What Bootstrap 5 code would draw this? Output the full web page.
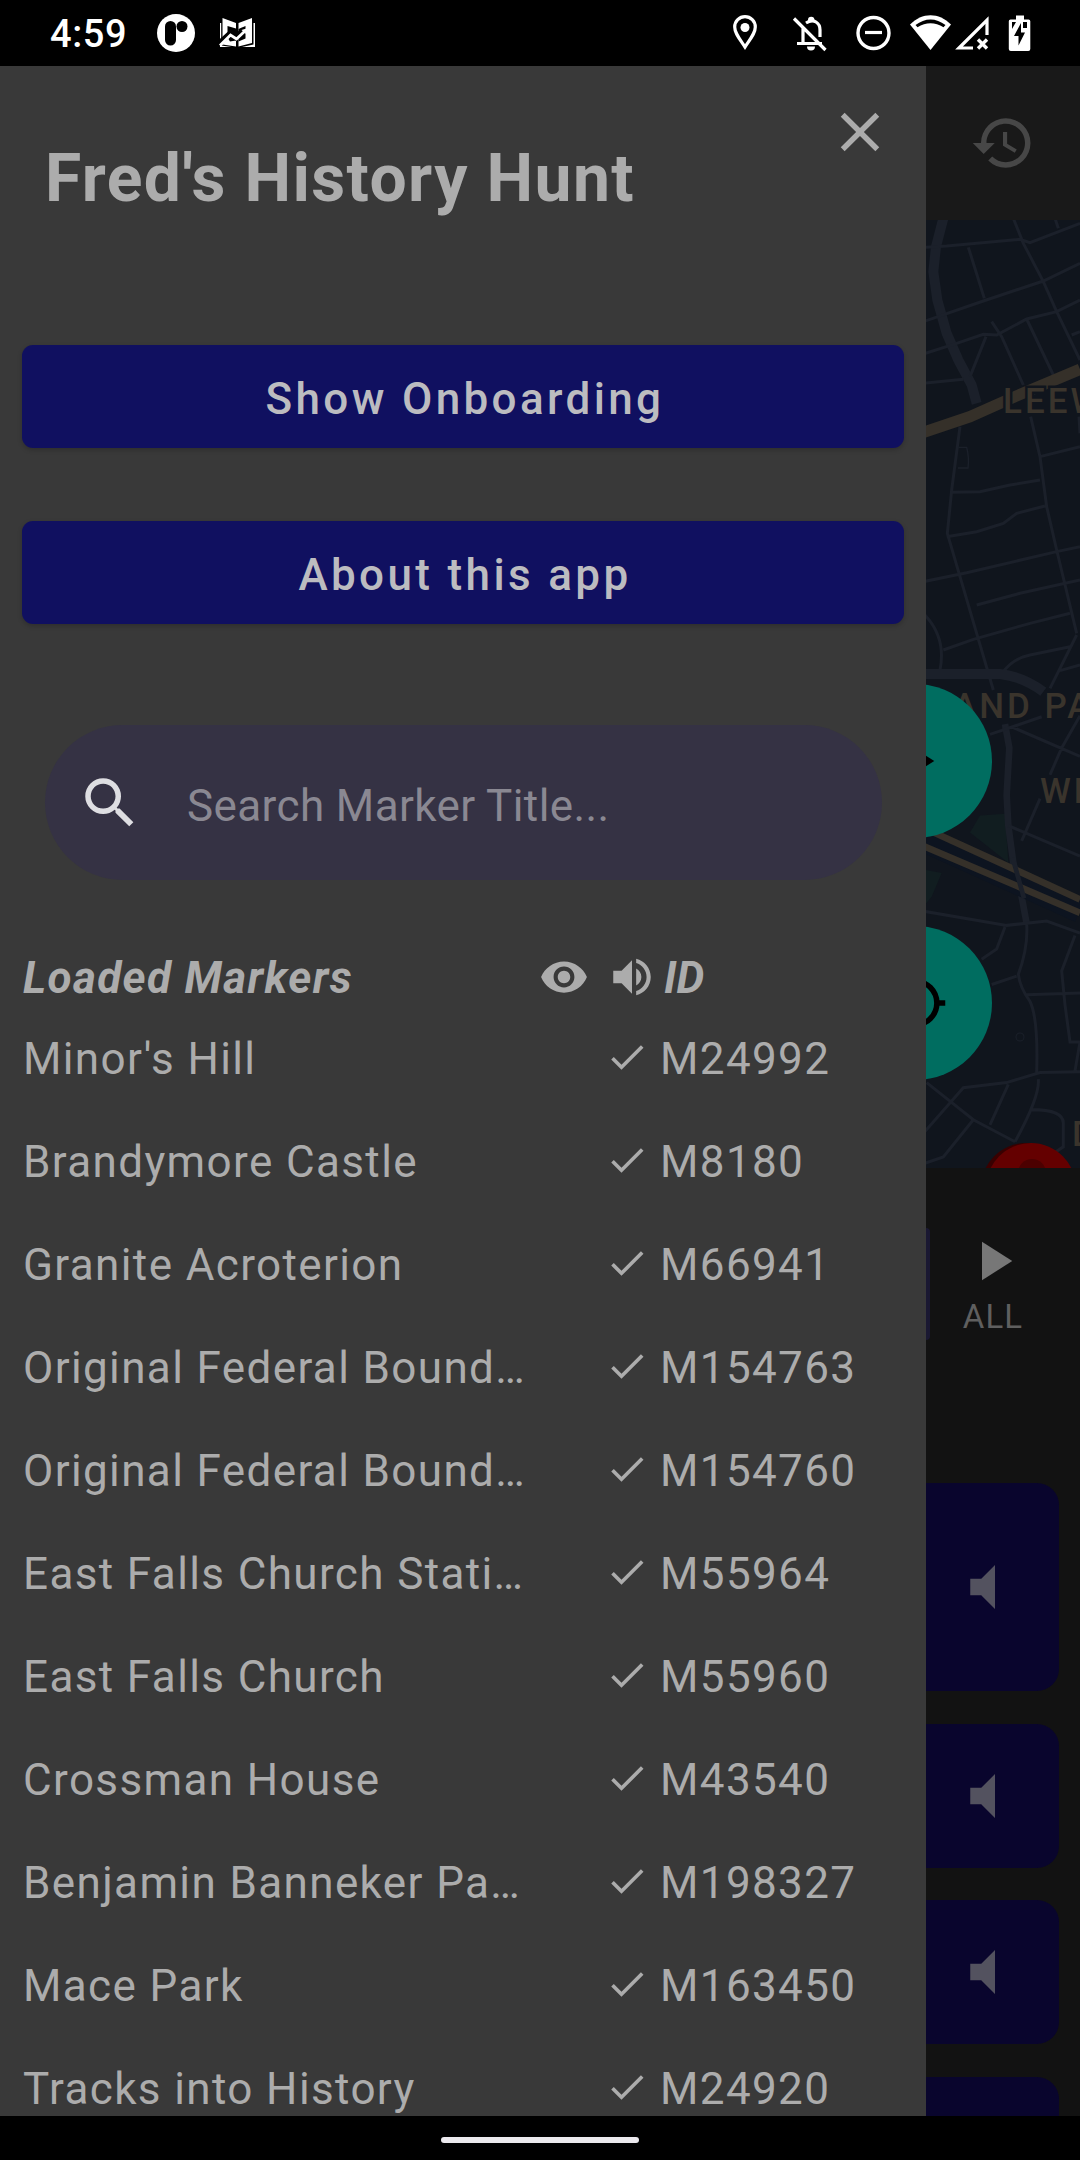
<!DOCTYPE html>
<html lang="en">
<head>
<meta charset="utf-8">
<meta name="viewport" content="width=device-width, initial-scale=1">
<title>Fred's History Hunt</title>
<link href="https://cdn.jsdelivr.net/npm/bootstrap@5.3.0/dist/css/bootstrap.min.css" rel="stylesheet">
<style>
body{font-family:Roboto,"Noto Sans",sans-serif;background:#000;color:#acacac;width:1080px;height:2160px;overflow:hidden;font-size:44px;line-height:1.2}
svg{display:block;flex:none}
.statusbar{height:66px;color:#fff;padding-left:50px}
.clock{font:500 38px/66px Roboto,sans-serif;letter-spacing:.6px;width:107px;padding-top:2px}
.screen{height:2050px}
.drawer{width:926px;background:#393939;overflow:hidden}
.side{width:154px;background:#121212;overflow:hidden}
.drawer>*,.side>*{flex:none}
.drawer-head{height:279px;padding:33px 33px 0 45px}
.drawer-title{font-size:66px;font-weight:700;line-height:78px;margin:41px 0 0;white-space:nowrap;letter-spacing:1.38px}
.btn-wide{height:103px;margin:0 22px 73px;border-radius:11px;background:#101060;color:#bcbcc0;font-size:44px;font-weight:500;letter-spacing:3.36px;line-height:1;border:0;box-shadow:0 2px 5px rgba(0,0,0,.2);padding:4px 0 0 4px}
.search{height:155px;margin:28px 44px 0 45px;border-radius:78px;background:#353244;padding:0 32px}
.search-text{color:#8a8892;margin-left:44px;padding-top:7px;letter-spacing:.4px}
.list-head{height:54px;margin-top:70px;font-weight:700;font-style:italic;padding-left:23px}
.list-head span{padding-top:2px}
.c-name{width:516px;letter-spacing:1.38px;white-space:nowrap}
.marker{height:103px;padding-left:23px;letter-spacing:1.38px;line-height:52px;padding-top:29px}
.speaker{margin-left:18px}
.tick{margin:2px 0 0 66px}
.c-id{margin-left:11px}
.h-id{margin-left:7px}
.topbar{height:154px;background:#191919;padding:44px 0 0 44px;color:#474747}
.mapbox{height:948px;background:#10151d;overflow:hidden}
.fab{width:154px;height:154px;border-radius:50%;left:-88px;background:#006d60;color:#000}
.fab-play{top:464px}.fab-loc{top:706px}
.controls{height:315px}
.edge{width:4px;height:112px;background:#1a1832;border-radius:0 5px 5px 0;margin-top:60px}
.all{width:66px;margin:60px 0 0 30px;color:#777}
.all-text{font-size:33px;line-height:40px;color:#5f5f5f;letter-spacing:1.1px;margin-top:3px}
.tile{background:#09052d;color:#53525f;width:133px;height:144px;border-radius:0 22px 22px 0;margin-bottom:32.5px;padding-left:25px}
.tile-tall{height:208px}
.navbar-pill{height:44px}
.navbar-pill span{width:198px;height:6px;border-radius:3px;background:#ebe9ee;margin-top:4px}
</style>
</head>
<body>
<header class="statusbar d-flex align-items-center">
  <div class="clock">4:59</div>
  <svg width="38" height="38" viewBox="0 0 38 38"><circle cx="19" cy="19" r="19" fill="#fff"/><rect x="8" y="7" width="11" height="24.500" rx="5.500"/><circle cx="25" cy="12.500" r="5.500"/></svg>
  <svg class="ms-4" width="36" height="32" viewBox="219 18 36 32"><g fill="#fff"><path d="M222.500 19l13.500 5v23.500l-13.500-2zM238.500 24L252 19v25l-13.500 3.500zM220 24h1.200v22.500l10 1.500H220zM253.500 24h1.500v24h-13l11.500-2.500z"/></g><path d="M227.500 27l8.500 2.500v12l-6 1-2.500-4zM238.500 30l7-3v12.500l-7 3z"/><path d="M219 44.500l11-10 6 4 8-8" stroke="#000" stroke-width="5.500" fill="none"/><path d="M220 46.500l10.500-10.500 6 4 8.500-8" stroke="#fff" stroke-width="2.800" fill="none"/><path d="M241.500 31l5-1.500-.8 5.500z" fill="#fff"/></svg>
  <svg class="ms-auto" width="350" height="66" viewBox="730 0 350 66">
    <g fill="none" stroke="#fff" stroke-width="3.200">
      <path d="M745 47C739 38 734.700 33 734.700 27a10.300 10.300 0 0 1 20.600 0C755.300 33 751 38 745 47z"/>
      <path d="M803 28v15M797 43.500h25M806 23c8-5 14 0 14 7v7M794 18.500l31.500 31.500"/>
      <circle cx="873.500" cy="33" r="15.500" stroke-width="3.400"/><path d="M865 32.500h17"/>
      <path d="M973 48h-14L987 20v15"/>
      <path d="M978 39.500l9 9m0-9l-9 9" stroke-width="3.400"/>
    </g>
    <g fill="#fff"><circle cx="745" cy="27.500" r="4.500"/><path d="M808 22v-2a3.200 3.200 0 0 1 6.400 0v2zM807 46.500h8a4 4 0 0 1-8 0z"/>
    <path d="M910 24.500C922 12 939 12 951 24.500L930.500 50z"/>
    <path d="M1016 15.500h8v4h4.500a1.800 1.800 0 0 1 1.800 1.800V49a2 2 0 0 1-2 2h-17.500a2 2 0 0 1-2-2V21.300a1.800 1.800 0 0 1 1.800-1.800h5.400z"/></g>
    <path d="M915.500 25C925 17.500 936 17.500 945.500 25l-2 2.300C935 22 926 22 917.500 27.300z"/>
    <path d="M1021 23l-7 13h4.500v9.500l6.500-13h-4zM1012 22h4l-4 7zM1023 22h4v6h-4z"/>
  </svg>
</header>

<main class="screen d-flex">
  <aside class="drawer d-flex flex-column">
    <div class="drawer-head d-flex justify-content-between">
      <h1 class="drawer-title">Fred's History Hunt</h1>
      <svg width="66" height="66" viewBox="0 0 24 24" fill="currentColor"><path d="M19 6.410L17.590 5 12 10.590 6.410 5 5 6.410 10.590 12 5 17.590 6.410 19 12 13.410 17.590 19 19 17.590 13.410 12z"/></svg>
    </div>
    <button class="btn btn-wide" type="button">Show Onboarding</button>
    <button class="btn btn-wide" type="button">About this app</button>
    <div class="search d-flex align-items-center">
      <svg width="66" height="66" viewBox="0 0 24 24" fill="#dedee2"><path d="M15.500 14h-.79l-.28-.27A6.471 6.471 0 0 0 16 9.500 6.500 6.500 0 1 0 9.500 16c1.610 0 3.090-.59 4.230-1.570l.27.28v.79l5 4.990L20.490 19l-4.990-5zm-6 0C7.010 14 5 11.990 5 9.500S7.010 5 9.500 5 14 7.010 14 9.500 11.990 14 9.500 14z"/></svg>
      <span class="search-text">Search Marker Title...</span>
    </div>
    <div class="list-head d-flex align-items-center">
      <span class="c-name">Loaded Markers</span>
      <svg width="50" height="50" viewBox="0 0 24 24" fill="currentColor"><path d="M12 4.500C7 4.500 2.730 7.610 1 12c1.730 4.390 6 7.500 11 7.500s9.270-3.110 11-7.500c-1.730-4.390-6-7.500-11-7.500zM12 17c-2.760 0-5-2.240-5-5s2.240-5 5-5 5 2.240 5 5-2.240 5-5 5zm0-8c-1.660 0-3 1.340-3 3s1.340 3 3 3 3-1.340 3-3-1.340-3-3-3z"/></svg>
      <svg class="speaker" width="50" height="50" viewBox="0 0 24 24" fill="currentColor"><path d="M3 9v6h4l5 5V4L7 9H3zm13.500 3c0-1.770-1.020-3.290-2.500-4.030v8.050c1.480-.73 2.500-2.250 2.500-4.020zM14 3.230v2.060c2.890.86 5 3.540 5 6.710s-2.110 5.850-5 6.710v2.060c4.010-.91 7-4.490 7-8.770s-2.990-7.860-7-8.770z"/></svg>
      <span class="h-id">ID</span>
    </div>
    <div id="markers"></div>
  </aside>

  <section class="side d-flex flex-column">
    <div class="topbar"><svg width="66" height="66" viewBox="0 0 24 24" fill="currentColor"><path d="M13 3a9 9 0 0 0-9 9H1l3.890 3.890.07.14L9 12H6c0-3.870 3.130-7 7-7s7 3.130 7 7-3.130 7-7 7c-1.930 0-3.680-.79-4.940-2.060l-1.420 1.420A8.954 8.954 0 0 0 13 21a9 9 0 0 0 0-18zm-1 5v5l4.280 2.540.72-1.210-3.500-2.080V8H12z"/></svg></div>
    <div class="mapbox position-relative">
      <svg width="154" height="948" viewBox="926 220 154 948">
        <g transform="translate(880 200) scale(.33333)" fill="none" stroke="#1b202a" stroke-width="9">
          <path d="M190 55L168 140 160 215 172 300 200 400 235 480 275 555 290 610" stroke-width="30"/>
          <path d="M130 142L200 138 420 118 450 128 600 70M265 142L313 295M400 55L430 130 490 245 530 335 600 480M525 55L535 85M130 365L310 303 490 243 600 190M130 462L230 430 310 403 350 405 440 357 530 335 600 300M335 365L365 410 430 555M440 357L520 525M318 410L270 530M130 550L250 538M575 405L600 395"/>
          <path d="M240 680L215 870 202 1000 240 1130 290 1300 340 1470M452 650L480 770 500 920 530 1050 590 1300M480 770L600 740M215 877L300 875 390 855 480 840M200 1010L290 995 370 970 410 940 495 918M130 1145L260 1118 530 1055 600 1040M290 1215L420 1180 600 1140M190 1350L280 1318 450 1270 570 1240M130 1240Q200 1310 180 1410M370 1415Q400 1375 450 1365L570 1340M590 1305L510 1465M540 1412L600 1395M597 650L600 700"/>
          <path d="M235 742h25q8 30 4 62h-30" stroke-width="4"/>
          <path d="M130 1422H360Q430 1430 490 1475" stroke-width="30"/>
          <path d="M130 697L270 650 400 592 600 508" stroke="#353029" stroke-width="34"/>
        </g>
        <g transform="translate(880 660) scale(.33333 .33807)" fill="none" stroke="#1b202a" stroke-width="9">
          <path d="M270 510L300 460 375 455 385 600zM130 620l55 10-30 70-25 30z" fill="#111d20" stroke="none"/>
          <path d="M375 190L388 260 380 400 385 490 400 600 425 700 440 780" stroke-width="20"/>
          <path d="M330 220L485 168M400 200L600 285M600 165L545 260 510 340M480 410L425 535M385 490L600 580M130 743L380 785 500 772 600 808M375 790L350 855 305 885M335 960L410 935M440 780Q445 850 415 930 420 970 450 1010 475 1060 470 1220M440 990L600 985M585 815L545 920 555 1020 570 1130H600M600 1130L585 1215M130 1400L250 1265 380 1250 480 1220 600 1218M140 1250L280 1360 405 1425M385 1255L330 1375M280 1360L190 1470 130 1490M475 1240Q480 1290 405 1425M455 1330Q550 1330 550 1370V1440L520 1460"/>
          <circle cx="420" cy="1115" r="12" stroke-width="3"/>
          <path d="M130 530L600 740" stroke="#0d1420" stroke-width="75"/>
          <path d="M150 505L600 708M130 550L600 748" stroke="#353029" stroke-width="20"/>
          <path d="M398 585l34 120" stroke-width="14"/>
        </g>
        <g font-family="Roboto,sans-serif" font-size="35" font-weight="500" fill="#3a342c" stroke="#10151d" stroke-width="5" paint-order="stroke" letter-spacing="3">
          <text x="1003" y="413">LEEW</text><text x="953" y="718">AND PA</text><text x="1040" y="803">WE</text><text x="1072" y="1146">D</text>
        </g>
        <circle cx="1026" cy="1188" r="45" fill="#390000"/><circle cx="1031" cy="1188" r="45" fill="#640000"/><circle cx="1032" cy="1173" r="14" fill="#4c0000"/>
      </svg>
      <div class="fab fab-play position-absolute d-flex align-items-center justify-content-center"><svg width="66" height="66" viewBox="0 0 24 24"><path d="M8 5v14l11-7z"/></svg></div>
      <div class="fab fab-loc position-absolute d-flex align-items-center justify-content-center"><svg width="66" height="66" viewBox="0 0 24 24" fill="none" stroke="#000" stroke-width="2"><circle cx="12" cy="12" r="7.950"/><path d="M12 1v3m0 16v3M1 12h3m16 0h3"/></svg></div>
    </div>
    <div class="controls d-flex">
      <div class="edge"></div>
      <div class="all d-flex flex-column align-items-center"><svg width="66" height="66" viewBox="0 0 24 24" fill="currentColor"><path d="M8 5v14l11-7z"/></svg><span class="all-text">ALL</span></div>
    </div>
    <div class="tile tile-tall d-flex align-items-center"><svg width="66" height="66" viewBox="0 0 24 24" fill="currentColor"><path d="M7 9v6h4l5 5V4l-5 5H7z"/></svg></div>
    <div class="tile d-flex align-items-center"><svg width="66" height="66" viewBox="0 0 24 24" fill="currentColor"><path d="M7 9v6h4l5 5V4l-5 5H7z"/></svg></div>
    <div class="tile d-flex align-items-center"><svg width="66" height="66" viewBox="0 0 24 24" fill="currentColor"><path d="M7 9v6h4l5 5V4l-5 5H7z"/></svg></div>
    <div class="tile"></div>
  </section>
</main>
<footer class="navbar-pill d-flex align-items-center justify-content-center"><span></span></footer>
<script>
const markers=[["Minor's Hill","M24992"],["Brandymore Castle","M8180"],["Granite Acroterion","M66941"],["Original Federal Bound…","M154763"],["Original Federal Bound…","M154760"],["East Falls Church Stati…","M55964"],["East Falls Church","M55960"],["Crossman House","M43540"],["Benjamin Banneker Pa…","M198327"],["Mace Park","M163450"],["Tracks into History","M24920"]];
document.getElementById('markers').innerHTML=markers.map(([n,i])=>`<div class="marker d-flex align-items-start"><span class="c-name">${n}</span><svg class="tick" width="44" height="44" viewBox="0 0 24 24" fill="currentColor"><path d="M9 16.200L4.800 12l-1.400 1.400L9 19 21 7l-1.400-1.400L9 16.200z"/></svg><span class="c-id">${i}</span></div>`).join('');
</script>
<script src="https://cdn.jsdelivr.net/npm/bootstrap@5.3.0/dist/js/bootstrap.bundle.min.js"></script>
</body>
</html>
